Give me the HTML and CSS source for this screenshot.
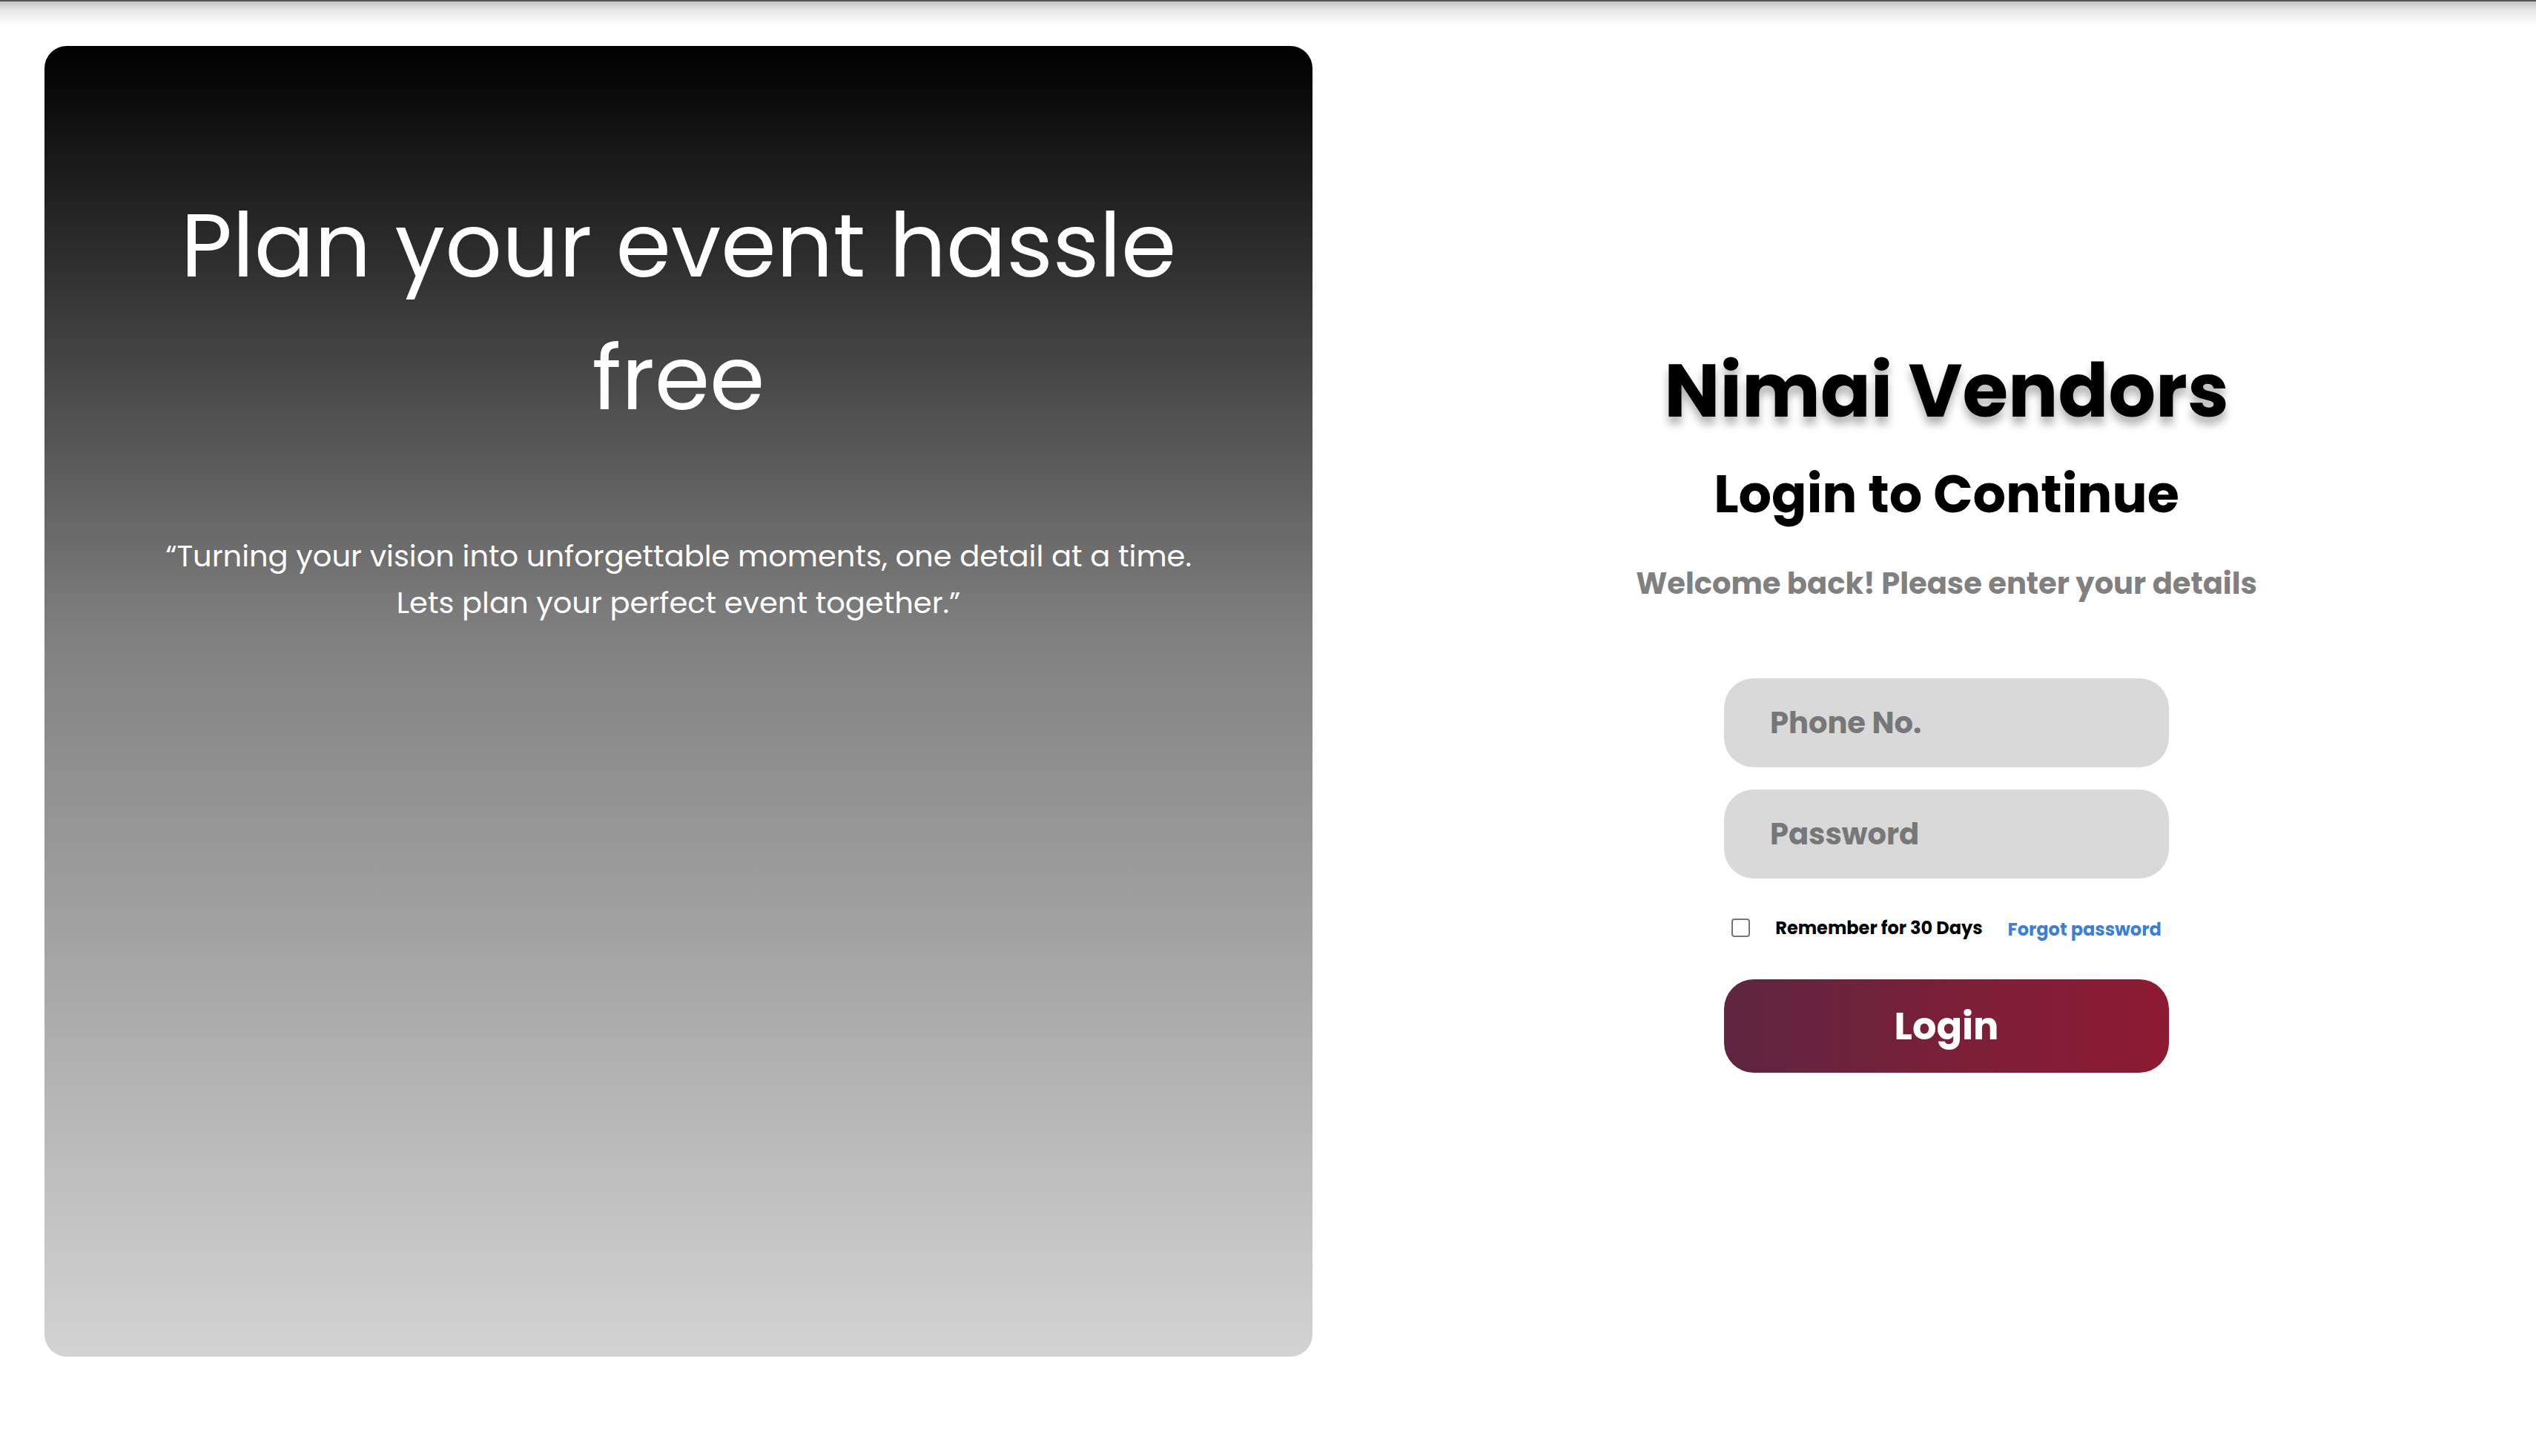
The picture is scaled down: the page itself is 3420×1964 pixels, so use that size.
FILE: index.html
```html
<!DOCTYPE html>
<html lang="en">
<head>
<meta charset="utf-8">
<title>Nimai Vendors - Login</title>
<link rel="stylesheet" href="styles.css">
</head>
<body>
<div class="topshade"></div>
<main class="page">
  <section class="hero">
    <h1 class="hero-title">Plan your event hassle<br>free</h1>
    <p class="hero-quote">“Turning your vision into unforgettable moments, one detail at a time.<br>Lets plan your perfect event together.”</p>
  </section>
  <section class="login">
    <h2 class="brand">Nimai Vendors</h2>
    <h3 class="subtitle">Login to Continue</h3>
    <p class="welcome">Welcome back! Please enter your details</p>
    <form class="form">
      <input class="field" type="text" placeholder="Phone No.">
      <input class="field" type="password" placeholder="Password">
      <div class="options">
        <input class="check" type="checkbox" id="remember">
        <label class="remember" for="remember">Remember for 30 Days</label>
        <a class="forgot" href="#">Forgot password</a>
      </div>
      <button class="submit" type="button">Login</button>
    </form>
  </section>
</main>
</body>
</html>
```
FILE: styles.css
```css
html, body {
  margin: 0;
  padding: 0;
  background: #ffffff;
}
body {
  font-family: Poppins, Inter, "Noto Sans", sans-serif;
  overflow: hidden;
}
.topshade {
  height: 36px;
  background: linear-gradient(to bottom, #555555 0, #555555 2px, #c4c4c4 2px, #e8e8e8 14px, #ffffff 36px);
}
.page {
  display: flex;
  align-items: flex-start;
}
.hero {
  width: 50%;
  flex: none;
  height: 90vh;
  margin: 26px 60px 0 60px;
  box-sizing: border-box;
  border-radius: 30px;
  background: linear-gradient(to bottom, #000000 0%, #808080 45%, #d3d3d3 100%);
  padding-top: 180px;
  text-align: center;
  color: #ffffff;
}
.hero-title {
  margin: 0;
  font-weight: 400;
  font-size: 120px;
  line-height: 179px;
}
.hero-quote {
  margin: 119px 0 0;
  font-weight: 400;
  font-size: 40px;
  line-height: 63px;
}
.login {
  flex: 1;
  display: flex;
  flex-direction: column;
  align-items: center;
  padding-top: 441px;
}
.brand {
  margin: 0;
  font-size: 100px;
  line-height: 1;
  font-weight: 700;
  color: #000000;
  text-shadow: 0 10px 12px rgba(0, 0, 0, 0.3);
}
.subtitle {
  margin: 55px 0 0;
  font-size: 70px;
  line-height: 1;
  font-weight: 700;
  color: #000000;
}
.welcome {
  margin: 65px 0 0;
  font-size: 40px;
  line-height: 1;
  font-weight: 700;
  color: #808080;
}
.form {
  margin-top: 108px;
  width: 600px;
  display: flex;
  flex-direction: column;
  align-items: center;
}
.field {
  box-sizing: border-box;
  width: 600px;
  height: 120px;
  margin: 0 0 30px;
  border: none;
  outline: none;
  border-radius: 40px;
  background: #d9d9d9;
  padding: 0 0 0 62px;
  font-family: inherit;
  font-size: 40px;
  font-weight: 700;
  color: #333;
}
.field::placeholder {
  color: #777777;
  opacity: 1;
}
.options {
  margin-top: 24px;
  height: 25px;
  display: flex;
  align-items: center;
  gap: 34px;
}
.check {
  appearance: none;
  -webkit-appearance: none;
  margin: 0;
  width: 25px;
  height: 25px;
  box-sizing: border-box;
  border: 2px solid #767676;
  border-radius: 4px;
  background: #ffffff;
}
.remember {
  font-size: 24px;
  font-weight: 700;
  color: #000000;
}
.forgot {
  font-size: 24px;
  font-weight: 700;
  color: #3b7fd6;
  text-decoration: none;
  padding-top: 3px;
}
.submit {
  margin-top: 57px;
  width: 600px;
  height: 126px;
  border: none;
  border-radius: 40px;
  background: linear-gradient(to right, #5e2640 0%, #7a2038 50%, #8e1a33 100%);
  color: #ffffff;
  font-family: inherit;
  font-size: 51px;
  font-weight: 700;
  cursor: pointer;
}
```
